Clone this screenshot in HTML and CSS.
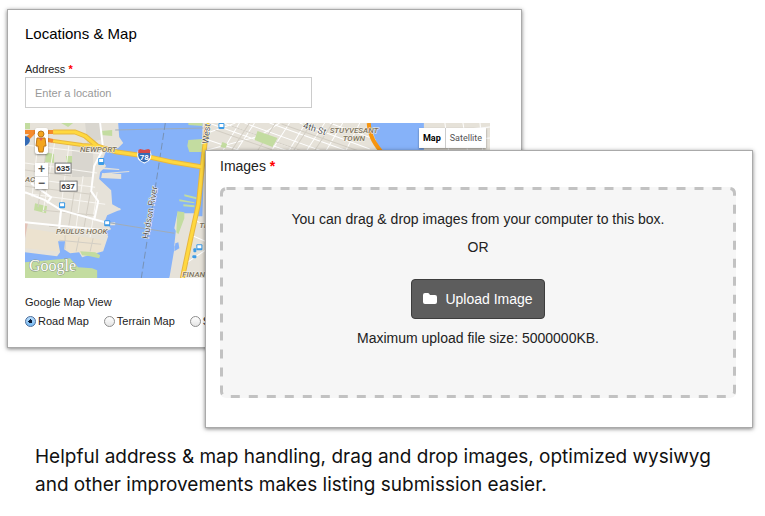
FILE: index.html
```
<!DOCTYPE html>
<html lang="en">
<head>
  <meta charset="UTF-8" />
  <title>Listing submission</title>
  <link rel="stylesheet" href="styles.css">
</head>
<body>
  <main>
    <div class="cards">
      <section class="card location">
        <h2>Locations &amp; Map</h2>

        <label class="field-label" for="address">Address <span class="required">*</span></label>
        <input type="text" id="address" class="address" placeholder="Enter a location" />

        <div class="map">
          <svg class="map-drawing" viewBox="26 123 464 155" preserveAspectRatio="xMinYMin slice" role="img" aria-label="Map of the Hudson River">
            <rect x="26" y="123" width="464" height="155" fill="#e6e2d9" />

            <!-- New Jersey blocks and streets -->
            <path d="M73 145h21v32H73zM86 123h16l2 16-16 4z" fill="#d9d6cf" />
            <path d="M28 228l78 12-2 11-18 3-60-6z" fill="#ece2cf" />
            <path d="M26 222h3l-3 16z" fill="#e3c3b8" />
            <g fill="#c3dca0">
              <path d="M46 152l9 2v9l-9-1zM67 156h6v7h-6zM102 131l11-1v6l-11-1zM36 203l12 3-1 7-12-3zM62 123h12l-5 4zM26 123h5v6h-5z" />
            </g>
            <g fill="none" stroke="#f8f6f2" stroke-width="1">
              <path d="M26 145l78 9M26 163l72 10M26 178l70 9M26 193l80 11M40 133l-7 64M56 140l-12 72M70 144l-11 86M84 176l-8 58M98 192l-7 45" />
            </g>
            <g fill="none" stroke="#d3cec4" stroke-width="1">
              <path d="M26 170l46 6M26 186l66 8M44 210l52 5M50 226l50 3M48 145l-9 62M77 180l-8 50M92 188l-8 44M60 240l42 4M66 235v14M80 237l-3 14M94 238l-3 13" />
            </g>
            <path d="M26 222l80 8M26 192l20 8 16 10 44 12M32 183l20 14-4 6M62 210l-2 20" fill="none" stroke="#fff" stroke-width="2" />
            <path d="M101 123l3 26-9 17-3 25 7 10-4 19" fill="none" stroke="#fff" stroke-width="2" />

            <!-- Hudson River with its piers -->
            <path d="M119 123h87l-3 93h-25l-3 29 3 8-8 25H97v-18l-14-3 21-6 5-15-3-5 6-2-6-9 2-5 14-6-9-5-1-14-12-11 1-7 6-6-4-5 4-10 12-3 5-5-4-6z" fill="#86b2f9" />
            <path d="M26 252l32 4 3-4-2-11h7l-1 8 6 4 9-1 3 5 16-3v24H26z" fill="#86b2f9" />
            <path d="M26 262l45-4 8 9 14 1 5 2v8H26z" fill="#c3dca0" />
            <path d="M81 251l15 1 5 3-1 3-9-2-8-1z" fill="#c3dca0" />
            <g fill="#e6e2d9">
              <path d="M100 167l20 2v1l-20-1zM103 173l19 1v5l-20-1zM106 173l24-2v1l-24 2zM106 208h15v2h-15zM106 223l10-1v3h-10z" />
              <path d="M178 213h17l-3 65h-22l5-29 3-16-3-5zM203 123h7v30h-7z" />
            </g>
            <path d="M176 243l3-1 1 6-5 3z" fill="#86b2f9" />
            <g fill="#c3dca0">
              <path d="M189 140l14-1v13h-13l-2-6zM185 194l12 3v2l-12-3zM180 199l15 3v1l-15-2zM184 204l11 1v2l-11-1zM178 211l7 1v6l-6 16-2-2zM189 123h14v3l-14-1z" />
            </g>
            <path d="M116 130l88-2M107 222l68 11" fill="none" stroke="#a0acb8" stroke-width="1" />
            <path d="M166 123l-24 155" fill="none" stroke="#7892b5" stroke-width="1" stroke-dasharray="7 3" />

            <!-- Manhattan -->
            <g fill="none" stroke="#fff" stroke-width="1">
              <path d="M212 124l170 60M224 123l150 54M245 123l130 47M270 123l100 36M300 123l70 26M330 123l50 18M209 140l60 20M240 123l-24 40M255 123l-26 40M290 123l-26 40M306 123l-24 40M325 123l-26 40M343 123l-24 40M360 123l-20 40M208 133l28-10M208 150l52-14 20-13" />
              <path d="M445 123l4 30M463 123l5 30M480 123l3 30M424 133l66-6M424 143l66-5M196 220l9 5M192 235l14 6M188 262l18-12" />
            </g>
            <path d="M216 130l80 28M232 126l90 32M282 124l80 28M250 123l-26 40M276 123l-26 40M312 123l-26 40M333 123l-26 40" fill="none" stroke="#d3cec4" stroke-width="1" />
            <path d="M258 131l20 7-5 9-18-7zM223 142l5 2-2 4-5-1zM303 124l8 1-2 3zM376 143l8 2-1 5-7-1z" fill="#c3dca0" />
            <path d="M370 123h54v30h-43l-6-15z" fill="#86b2f9" />

            <!-- highways -->
            <g fill="none" stroke="#e7b740" stroke-width="5" stroke-linejoin="round">
              <path d="M54 132h22l10 4 12 10 20 6 28 4 27 6 30 5M208 123l-5 43-4 38-8 36-8 38" />
              <path d="M54 141l29 4 15 1" stroke-width="4" />
            </g>
            <g fill="none" stroke="#ffd83f" stroke-width="3" stroke-linejoin="round">
              <path d="M54 132h22l10 4 12 10 20 6 28 4 27 6 30 5M208 123l-5 43-4 38-8 36-8 38" />
              <path d="M54 141l29 4 15 1" stroke-width="2" />
            </g>
            <path d="M26 132h28M34 133l-6 6M44 139l10 2" fill="none" stroke="#f58a2c" stroke-width="4" />
            <path d="M369 123c1 15 7 22 16 33" fill="none" stroke="#f79510" stroke-width="4" />

            <!-- road shields -->
            <g class="shield-box">
              <rect x="56" y="163" width="16" height="10" />
              <rect x="61" y="181" width="17" height="10" />
            </g>
            <text class="shield-number" x="64" y="171">635</text>
            <text class="shield-number" x="69" y="189">637</text>
            <g id="interstate">
              <path d="M139 151l2-1 4 1 4-1 2 1c2 6-1 10-6 12-5-2-8-6-6-12z" fill="#346bb5" stroke="#fff" stroke-width="1" />
              <path d="M139 150l2-1 4 1 4-1 2 1v3h-12z" fill="#d34a49" />
              <text class="interstate-number" x="145" y="160">78</text>
            </g>
            <path d="M26 136c6 1 7 7 0 10z" fill="#346bb5" />

            <!-- stations -->
            <g fill="#3c9be6">
              <rect x="99" y="158" width="6" height="7" rx="1" />
              <rect x="60" y="202" width="6" height="6" rx="1" />
              <rect x="105" y="220" width="6" height="6" rx="1" />
              <rect x="219" y="123" width="6" height="6" rx="1" />
              <rect x="197" y="244" width="6" height="6" rx="1" />
              <rect x="194" y="248" width="3" height="4" rx="1" />
              <rect x="193" y="255" width="4" height="3" rx="1" />
            </g>
            <g fill="#fff">
              <path d="M100 159h4v3h-4zM61 203h4v3h-4zM106 221h4v3h-4zM220 124h4v3h-4zM198 245h4v3h-4z" />
            </g>

            <g class="place">
              <text x="81" y="152">NEWPORT</text>
              <text x="57" y="234">PAULUS HOOK</text>
              <text x="26" y="182">AC</text>
              <text x="330" y="133">STUYVESANT</text>
              <text x="343" y="141">TOWN</text>
              <text x="183" y="277">FINANCIAL</text>
              <text x="200" y="228">TRIBECA</text>
              <text x="277" y="155">NOHO</text>
            </g>
            <g class="street">
              <text transform="translate(149 239) rotate(-80)">Hudson River</text>
              <text transform="translate(209 144) rotate(-84)">West</text>
              <text transform="translate(303 128) rotate(18)">4th St</text>
            </g>
            <text class="map-brand" x="30" y="271">Google</text>
          </svg>

          <div class="map-side">
            <button type="button" class="pegman" aria-label="Street View">
              <svg viewBox="0 0 12 24" width="12" height="24">
                <path d="M2 9h8l1 8H9l-1 6H4l-1-6H1z" fill="#f4a51e" stroke="#b9751b" stroke-width="1" />
                <circle cx="6" cy="5" r="3" fill="#f4a51e" stroke="#b9751b" />
                <path d="M4 9h4l-2 3z" fill="#e65c55" />
              </svg>
            </button>
            <div class="zoom">
              <button type="button" aria-label="Zoom in">+</button>
              <button type="button" aria-label="Zoom out">−</button>
            </div>
          </div>
          <div class="map-type">
            <button type="button" class="active">Map</button>
            <button type="button">Satellite</button>
          </div>
        </div>

        <fieldset class="map-view">
          <legend>Google Map View</legend>
          <div class="options">
            <label><input type="radio" name="view" checked /> Road Map</label>
            <label><input type="radio" name="view" /> Terrain Map</label>
            <label><input type="radio" name="view" /> Satellite Map</label>
          </div>
        </fieldset>
      </section>

      <section class="card images">
        <h3>Images <span class="required">*</span></h3>
        <div class="dropzone">
          <svg class="dash" aria-hidden="true"><rect x="1.5" y="1.5" rx="5" /></svg>
          <p>You can drag &amp; drop images from your computer to this box.</p>
          <p>OR</p>
          <button type="button" class="upload">
            <svg viewBox="0 0 14 12" width="14" height="12">
              <path d="M0 2q0-2 2-2h3q1 0 2 2h5q2 0 2 2v5q0 2-2 2H2q-2 0-2-2z" fill="#fff" />
            </svg>
            Upload Image
          </button>
          <p>Maximum upload file size: 5000000KB.</p>
        </div>
      </section>
    </div>

    <p class="caption">Helpful address &amp; map handling, drag and drop images, optimized wysiwyg and other improvements makes listing submission easier.</p>
  </main>
</body>
</html>
```
FILE: styles.css
```
* {
  box-sizing: border-box;
}

body {
  margin: 0;
  background: #fff;
  color: #222;
  font-family: "Liberation Sans", Arial, sans-serif;
  font-size: 14px;
}

main {
  padding: 9px 12px 0 7px;
}

h2,
h3,
p {
  margin: 0;
  font-weight: normal;
}

button {
  font-family: inherit;
  cursor: pointer;
}

.required {
  color: #f00;
  font-weight: bold;
}

/* both cards share one grid row, the second one lies over the first */
.cards {
  display: grid;
  grid-template-columns: 198px 317px 1fr;
}

.card {
  grid-row: 1;
  align-self: start;
  background: #fff;
  border: 1px solid #aaa;
  box-shadow: 0 1px 4px rgba(0, 0, 0, 0.5);
}

.location {
  grid-column: 1 / 3;
  padding: 14px 31px 18px 17px;
  font-size: 11px;
}

.images {
  grid-column: 2 / 4;
  margin-top: 141px;
  padding: 6px 16px 29px 14px;
  z-index: 1;
}

h2 {
  color: #000;
  font-size: 15px;
  line-height: 20px;
  margin-bottom: 17px;
}

h3 {
  font-size: 14px;
  line-height: 18px;
  margin-bottom: 12px;
}

.field-label {
  display: block;
  line-height: 16px;
}

.address {
  display: block;
  width: 287px;
  height: 31px;
  padding: 0 9px;
  border: 1px solid #ccc;
  font-family: inherit;
  font-size: 11px;
}

.address::placeholder {
  color: #999;
}

/* map */
.map {
  position: relative;
  margin-top: 15px;
}

.map-drawing {
  display: block;
  width: 100%;
  height: 155px;
}

.map-drawing text {
  font-family: Roboto, sans-serif;
}

.place text {
  fill: #7d725c;
  stroke: #f5f2ea;
  stroke-width: 1px;
  paint-order: stroke;
  font-size: 8px;
  font-style: italic;
  font-weight: 500;
}

.street text {
  fill: #555;
  stroke: #fff;
  stroke-width: 1px;
  paint-order: stroke;
  font-size: 9px;
}

.shield-box rect {
  fill: #fff;
  stroke: #777;
}

.map-drawing .shield-number,
.map-drawing .interstate-number {
  font-size: 8px;
  font-weight: bold;
  text-anchor: middle;
  fill: #333;
}

.map-drawing .interstate-number {
  fill: #fff;
}

.map-drawing .map-brand {
  font-family: "Liberation Serif", serif;
  font-size: 16px;
  fill: #fff;
  stroke: #8a9784;
  stroke-width: 1px;
  paint-order: stroke;
}

.map-side {
  position: absolute;
  top: 5px;
  left: 10px;
  display: flex;
  flex-direction: column;
  gap: 9px;
}

.map-side button {
  display: block;
  width: 13px;
  padding: 0;
  border: 0;
  background: #fff;
}

.map-side .pegman,
.zoom {
  border-radius: 2px;
  box-shadow: 0 1px 2px rgba(0, 0, 0, 0.4);
}

.pegman svg {
  display: block;
  height: 26px;
}

.zoom button {
  height: 13px;
  color: #555;
  font-size: 12px;
  font-weight: bold;
  line-height: 13px;
}

.zoom button + button {
  border-top: 1px solid #ddd;
}

.map-type {
  position: absolute;
  top: 5px;
  right: 4px;
  display: flex;
  box-shadow: 0 1px 2px rgba(0, 0, 0, 0.4);
}

.map-type button {
  height: 20px;
  padding: 0 4px;
  border: 0;
  background: #fff;
  color: #555;
  font-family: Roboto, sans-serif;
  font-size: 9px;
}

.map-type .active {
  border-right: 1px solid #ccc;
  color: #000;
  font-weight: bold;
}

/* map view */
.map-view {
  margin: 16px 0 0;
  padding: 0;
  border: 0;
}

.map-view legend {
  padding: 0;
  line-height: 16px;
}

.options {
  display: flex;
  gap: 15px;
  margin-top: 3px;
  white-space: nowrap;
}

.options label {
  display: flex;
  align-items: center;
  gap: 2px;
  line-height: 16px;
}

.options input {
  appearance: none;
  width: 11px;
  height: 11px;
  margin: 0;
  border: 1px solid #8e8e8e;
  border-radius: 50%;
  background: linear-gradient(#fff, #e4e4e4);
}

.options input:checked {
  border-color: #4a6d9c;
  background: radial-gradient(circle, #0b1c38 2px, transparent 2px), linear-gradient(#b9dcfa, #75b9f2);
}

/* upload box */
.dropzone {
  position: relative;
  display: flex;
  flex-direction: column;
  align-items: center;
  padding: 18px 20px 46px;
  border-radius: 6px;
  background: #f6f6f6;
  line-height: 28px;
  text-align: center;
}

.dash {
  position: absolute;
  top: 0;
  left: 0;
  width: 100%;
  height: 100%;
}

.dash rect {
  width: calc(100% - 3px);
  height: calc(100% - 3px);
  fill: none;
  stroke: #c2c2c2;
  stroke-width: 3px;
  stroke-dasharray: 9 9;
}

.upload {
  position: relative;
  display: flex;
  align-items: center;
  gap: 8px;
  height: 40px;
  margin: 18px 0 5px;
  padding: 0 11px;
  border: 1px solid #3d3d3d;
  border-radius: 4px;
  background: #5d5d5d;
  color: #fff;
  font-size: 14px;
}

.caption {
  padding: 15px 27px 0 28px;
  color: #111;
  font-family: Inter, sans-serif;
  font-size: 19px;
  line-height: 28px;
}
```
